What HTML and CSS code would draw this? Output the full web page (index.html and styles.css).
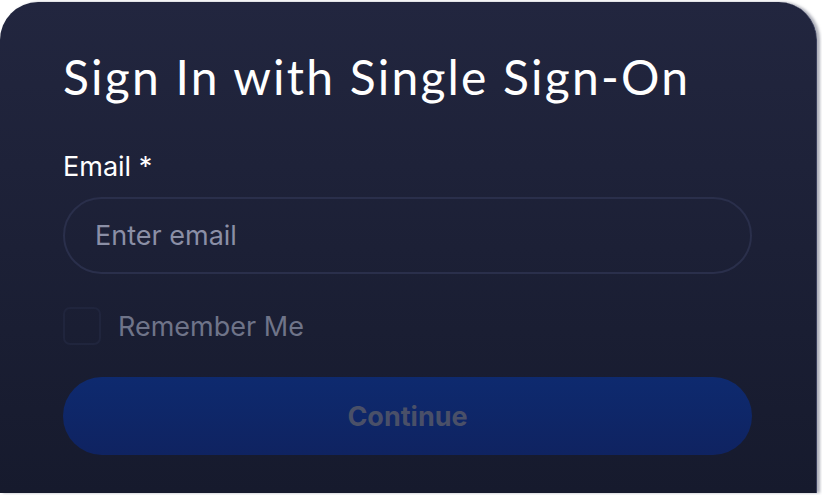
FILE: index.html
```html
<!DOCTYPE html>
<html lang="en">
<head>
    <meta charset="UTF-8">
    <title>Sign In</title>
    <link rel="stylesheet" href="styles.css">
</head>
<body>

<div class="card">
    <h1 class="title">Sign In with Single Sign-On</h1>
    <form class="form">
        <label class="field">
            <span class="field-label">Email *</span>
            <input class="input" type="email" placeholder="Enter email">
        </label>
        <label class="remember">
            <span class="check"></span>
            Remember Me
        </label>
        <button class="submit" type="button" disabled>Continue</button>
    </form>
</div>

</body>
</html>
```

FILE: styles.css
```css
* {
    box-sizing: border-box;
}

body {
    margin: 0;
    background: #fff;
    font-family: Inter, "Noto Sans", sans-serif;
    height: 495px;
    overflow: hidden;
}

.card {
    width: 817px;
    height: 491px;
    margin-top: 2px;
    padding: 45px 64px 0 63px;
    border-radius: 38px 38px 0 0;
    border-right: 1px solid #3a3f5c;
    background: linear-gradient(#22263f, #161a2d);
    box-shadow: 3px 0 3px rgba(120, 124, 140, .6);
}

.title {
    margin: 0;
    font-family: Lato, sans-serif;
    font-weight: 400;
    font-size: 48px;
    letter-spacing: 2.2px;
    line-height: 60px;
    color: #fff;
}

.form {
    display: flex;
    flex-direction: column;
    margin-top: 44px;
}

.field {
    display: flex;
    flex-direction: column;
    gap: 14px;
}

.field-label {
    font-size: 27px;
    line-height: 32px;
    color: #fff;
}

.input {
    height: 77px;
    width: 100%;
    padding: 0 30px;
    border: 2px solid #2a2f4b;
    border-radius: 40px;
    background: transparent;
    font-family: inherit;
    font-size: 27px;
    color: #fff;
    outline: none;
}

.input::placeholder {
    color: #8b8fa6;
}

.remember {
    display: flex;
    align-items: center;
    gap: 17px;
    margin-top: 33px;
    font-size: 27px;
    color: #6f7489;
}

.check {
    width: 38px;
    height: 38px;
    border: 2px solid #20253d;
    border-radius: 7px;
}

.submit {
    margin-top: 32px;
    height: 78px;
    width: 100%;
    border: none;
    border-radius: 40px;
    background: linear-gradient(#0e2a6f, #0f2361);
    font-family: inherit;
    font-weight: 700;
    font-size: 27px;
    color: #4a5068;
}
```
